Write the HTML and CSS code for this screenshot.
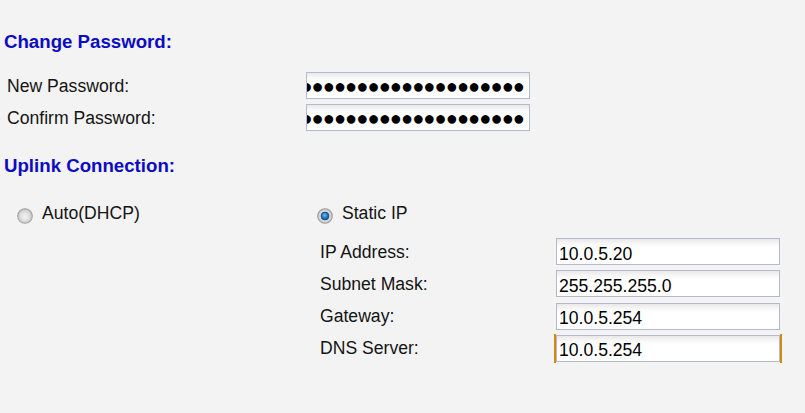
FILE: index.html
```html
<!DOCTYPE html>
<html lang="en">
<head>
<meta charset="utf-8">
<title>Network Settings</title>
<link rel="stylesheet" href="styles.css">
</head>
<body>
<div class="page">
  <h2 class="section-title title-password">Change Password:</h2>
  <div class="pw-grid">
    <label class="field-label">New Password:</label>
    <div class="field pw-field" role="textbox" aria-label="New Password"><span class="dots">●●●●●●●●●●●●●●●●●●●●●●</span></div>
    <label class="field-label">Confirm Password:</label>
    <div class="field pw-field" role="textbox" aria-label="Confirm Password"><span class="dots">●●●●●●●●●●●●●●●●●●●●●●</span></div>
  </div>

  <h2 class="section-title title-uplink">Uplink Connection:</h2>
  <div class="mode-row">
    <div class="mode-option mode-auto">
      <svg class="radio" width="16" height="16" viewBox="0 0 16 16" aria-hidden="true">
        <defs>
          <radialGradient id="gOff" cx="50%" cy="55%" r="55%">
            <stop offset="0%" stop-color="#f3f3f3"/>
            <stop offset="60%" stop-color="#dedede"/>
            <stop offset="100%" stop-color="#c2c2c2"/>
          </radialGradient>
        </defs>
        <circle cx="8" cy="8" r="7.3" fill="url(#gOff)" stroke="#a2a2a2" stroke-width="1.1"/>
        <circle cx="8" cy="8" r="5.6" fill="none" stroke="#d0d0d0" stroke-width="0.8"/>
      </svg>
      <span class="mode-text">Auto(DHCP)</span>
    </div>
    <div class="mode-option mode-static">
      <svg class="radio" width="16" height="16" viewBox="0 0 16 16" aria-hidden="true">
        <defs>
          <radialGradient id="gOn" cx="50%" cy="50%" r="55%">
            <stop offset="0%" stop-color="#eeeeee"/>
            <stop offset="70%" stop-color="#d6d6d6"/>
            <stop offset="100%" stop-color="#b8b8b8"/>
          </radialGradient>
          <radialGradient id="gDot" cx="45%" cy="40%" r="60%">
            <stop offset="0%" stop-color="#6cc0f4"/>
            <stop offset="55%" stop-color="#1f7fcf"/>
            <stop offset="100%" stop-color="#0c4f8e"/>
          </radialGradient>
        </defs>
        <circle cx="8" cy="8" r="7.3" fill="url(#gOn)" stroke="#9c9c9c" stroke-width="1.1"/>
        <circle cx="8" cy="8" r="3.9" fill="url(#gDot)" stroke="#234a70" stroke-width="0.9"/>
      </svg>
      <span class="mode-text">Static IP</span>
    </div>
  </div>

  <div class="static-grid">
    <label class="field-label" for="ip">IP Address:</label>
    <input class="field text-field" id="ip" type="text" value="10.0.5.20">
    <label class="field-label" for="mask">Subnet Mask:</label>
    <input class="field text-field" id="mask" type="text" value="255.255.255.0">
    <label class="field-label" for="gw">Gateway:</label>
    <input class="field text-field" id="gw" type="text" value="10.0.5.254">
    <label class="field-label" for="dns">DNS Server:</label>
    <span class="highlight-wrap"><input class="field text-field" id="dns" type="text" value="10.0.5.254"></span>
  </div>
</div>
</body>
</html>
```

FILE: styles.css
```css
html, body {
  margin: 0;
  padding: 0;
}

body {
  background: #f3f3f3;
  color: #141414;
  font-family: "Liberation Sans", Arial, sans-serif;
  font-size: 17.6px;
  width: 805px;
  height: 413px;
  overflow: hidden;
}

.page {
  padding-top: 31px;
}

.section-title {
  margin: 0;
  padding-left: 4px;
  font-size: 14pt;
  font-weight: bold;
  line-height: 22px;
  color: #0c0cc4;
}

.title-uplink {
  margin-top: 24px;
}

.pw-grid {
  margin-top: 19px;
  padding-left: 7px;
  display: grid;
  grid-template-columns: 299px 224px;
  grid-auto-rows: 27px;
  row-gap: 5px;
  align-items: center;
}

.field-label {
  line-height: 20px;
}

.field {
  box-sizing: border-box;
  height: 27px;
  width: 224px;
  border: 1px solid #b5b8cf;
  background: linear-gradient(to bottom, #e9e9e9 0px, #f8f8f8 5px, #ffffff 9px);
  color: #000;
  font-family: "Liberation Sans", Arial, sans-serif;
  font-size: 17.6px;
}

.pw-field {
  display: flex;
  justify-content: flex-end;
  align-items: center;
  overflow: hidden;
  padding: 1px 5px 0 5px;
  white-space: nowrap;
}

.dots {
  font-size: 20px;
  letter-spacing: -0.9px;
  line-height: 20px;
  flex: none;
}

.mode-row {
  margin-top: 26px;
  padding-left: 17px;
  display: flex;
  align-items: flex-start;
}

.mode-option {
  display: flex;
  align-items: flex-start;
  gap: 9px;
}

.mode-auto {
  width: 300px;
}

.radio {
  display: block;
  flex: none;
  margin-top: 5px;
}

.mode-text {
  line-height: 20px;
}

.static-grid {
  margin-top: 14px;
  margin-left: 320px;
  display: grid;
  grid-template-columns: 236px 224px;
  grid-auto-rows: 27px;
  row-gap: 5.33px;
  align-items: center;
}

.text-field {
  display: block;
  margin: 0;
  padding: 5px 2px 0 2px;
  outline: none;
}

.highlight-wrap {
  display: block;
  width: 224px;
  margin: -1px 0 -1px -2px;
  padding: 1px 0;
  border-left: 2px solid #d18a0c;
  border-right: 2px solid #d18a0c;
}
```
